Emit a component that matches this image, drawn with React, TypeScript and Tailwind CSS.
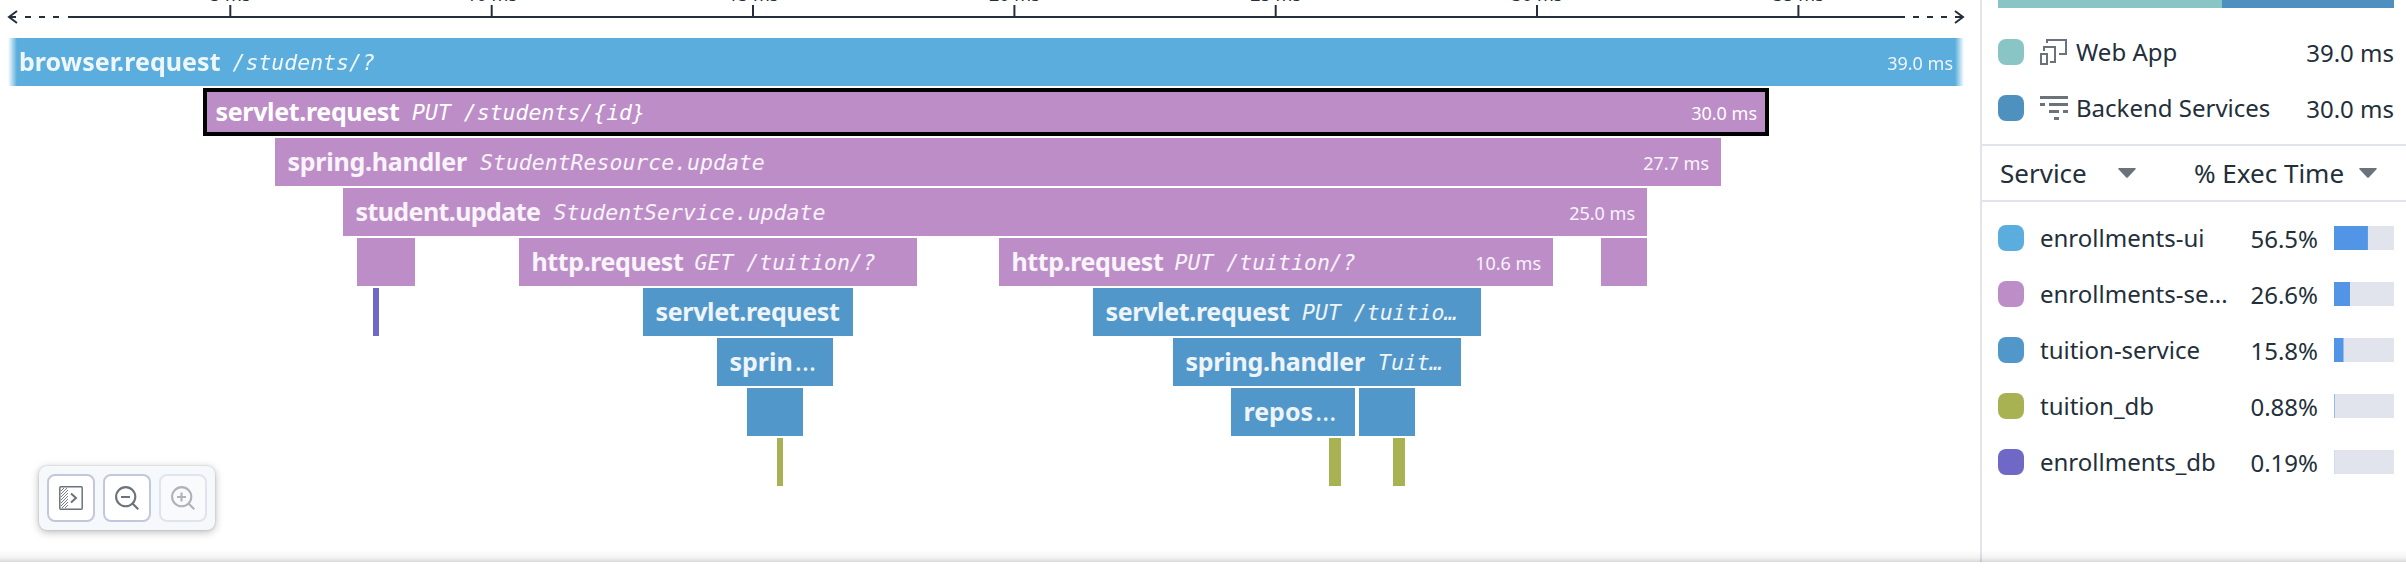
import React from "react";

type Span = { x: number; w: number; c: string; name?: string; cut?: boolean; res?: string; dur?: string; edge?: boolean; sel?: boolean; nameW?: string };

const P = "bg-[#bd8dc8]";
const B = "bg-[#5297c9]";
const G = "bg-[#a9b252]";

const BROWSER = "w-[200.5px] tracking-[0.06px]";
const SERVLET = "w-[183.5px] tracking-[-0.34px]";
const SPRING = "w-[179.5px] tracking-[-0.25px]";
const STUDENT = "w-[185px] tracking-[-0.6px]";
const HTTP = "w-[150px] tracking-[-0.4px]";

const rows: Span[][] = [
  [{ x: 8, w: 1956, c: "bg-[#5aaddc]", name: "browser.request", res: "/students/?", dur: "39.0 ms", edge: true, nameW: BROWSER }],
  [{ x: 203, w: 1566, c: P, name: "servlet.request", res: "PUT /students/{id}", dur: "30.0 ms", sel: true, nameW: SERVLET }],
  [{ x: 275, w: 1446, c: P, name: "spring.handler", res: "StudentResource.update", dur: "27.7 ms", nameW: SPRING }],
  [{ x: 343, w: 1304, c: P, name: "student.update", res: "StudentService.update", dur: "25.0 ms", nameW: STUDENT }],
  [
    { x: 357, w: 58, c: P },
    { x: 519, w: 398, c: P, name: "http.request", res: "GET /tuition/?", nameW: HTTP },
    { x: 999, w: 554, c: P, name: "http.request", res: "PUT /tuition/?", dur: "10.6 ms", nameW: HTTP },
    { x: 1601, w: 46, c: P },
  ],
  [
    { x: 373, w: 6, c: "bg-[#6f68c6]" },
    { x: 643, w: 210, c: B, name: "servlet.request", nameW: SERVLET },
    { x: 1093, w: 388, c: B, name: "servlet.request", res: "PUT /tuitio…", nameW: SERVLET },
  ],
  [
    { x: 717, w: 116, c: B, name: "sprin", cut: true },
    { x: 1173, w: 288, c: B, name: "spring.handler", res: "Tuit…", nameW: SPRING },
  ],
  [
    { x: 747, w: 56, c: B },
    { x: 1231, w: 124, c: B, name: "repos", cut: true },
    { x: 1359, w: 56, c: B },
  ],
  [
    { x: 777, w: 6, c: G },
    { x: 1329, w: 12, c: G },
    { x: 1393, w: 12, c: G },
  ],
];

function SpanBar({ s, gap }: { s: Span; gap: number }) {
  const pad = s.name ? (s.sel ? "border-4 border-black pl-[8.5px] pr-2" : s.edge ? "pl-[11px] pr-[11px]" : "pl-[12.5px] pr-3") : "";
  const text = s.sel ? "text-white" : "text-white/90";
  const fade = s.edge ? "[mask-image:linear-gradient(to_right,transparent,black_9px,black_calc(100%-9px),transparent)]" : "";
  return (
    <div className={`flex h-12 shrink-0 items-center overflow-hidden whitespace-nowrap ${s.c} ${pad} ${text} ${fade}`} style={{ marginLeft: gap, width: s.w }}>
      {s.name && (
        <span className={`mb-[3px] shrink-0 text-[25px] leading-[36px] font-bold ${s.nameW ?? ""}`}>
          {s.name}
          {s.cut && <span className="ml-0.5 text-[27px] font-normal">…</span>}
        </span>
      )}
      {s.res && <span className="mt-px ml-[13px] font-['DejaVu_Sans_Mono',monospace] text-[21.5px] leading-[36px] italic">{s.res}</span>}
      {s.dur && <span className="mt-0.5 ml-auto text-[18px]">{s.dur}</span>}
    </div>
  );
}

const ticks = [
  { x: 230.3, label: "5 ms" },
  { x: 491.7, label: "10 ms" },
  { x: 753, label: "15 ms" },
  { x: 1014.4, label: "20 ms" },
  { x: 1275.7, label: "25 ms" },
  { x: 1537, label: "30 ms" },
  { x: 1798.4, label: "35 ms" },
];

function Axis() {
  return (
    <svg width="1980" height="38" viewBox="0 0 1980 38" className="block shrink-0" fill="none" stroke="#232f3a" strokeWidth="2">
      <path d="M68 17H1905M10 17H16M25 17h6M39 17h6M53 17h6M1913 17h6M1927 17h6M1941 17h6M1955 17h8" />
      <path d="M17 11L9 17L17 23M1955 11L1963 17L1955 23" />
      {ticks.map((t) => (
        <g key={t.label}>
          <path d={`M${t.x} 5V17`} />
          <text x={t.x} y="1" textAnchor="middle" fill="#232f3a" stroke="none" className="text-[18px]">{t.label}</text>
        </g>
      ))}
    </svg>
  );
}

function Toolbar() {
  const btn = "flex size-12 items-center justify-center rounded-lg border-2";
  return (
    <div className="absolute top-[466px] left-[39px] flex h-16 w-44 items-center gap-2 rounded-lg bg-[#f6f9fc] px-2 shadow-[0_2px_8px_rgba(0,0,0,0.28),0_0_2px_rgba(0,0,0,0.2)]">
      <button className={`${btn} border-[#c2c7de] bg-white`}>
        <svg width="24" height="24" viewBox="0 0 24 24" fill="none" stroke="#6a737b" strokeWidth="1.5">
          <rect x="0.8" y="0.8" width="22.4" height="22.4" rx="1" />
          <path strokeWidth="0.9" d="M2 5L5 2M2 8L8 2M2 11L9 4M2 14L9 7M2 17L9 10M2 20L9 13M3 22L9 16M6 22L9 19" />
          <path strokeWidth="2" d="M12 7.5L17 12L12 16.5" />
        </svg>
      </button>
      <button className={`${btn} border-[#c2c7de] bg-white`}>
        <svg width="24" height="24" viewBox="0 0 24 24" fill="none" stroke="#6a737b" strokeWidth="2.1">
          <circle cx="10.7" cy="10.7" r="9.6" />
          <path d="M6 11H15M17.5 17.5L23.3 23.3" />
        </svg>
      </button>
      <button className={`${btn} border-[#e1e4ec] bg-[#f8fafc]`}>
        <svg width="24" height="24" viewBox="0 0 24 24" fill="none" stroke="#adb3b6" strokeWidth="2.1">
          <circle cx="10.7" cy="10.7" r="9.6" />
          <path d="M6 11H15M10.5 6.5V15.5M17.5 17.5L23.3 23.3" />
        </svg>
      </button>
    </div>
  );
}

const services = [
  { n: "enrollments-ui", c: "bg-[#5aaddc]", p: "56.5%", v: 0.565 },
  { n: "enrollments-se...", c: "bg-[#bd8dc8]", p: "26.6%", v: 0.266 },
  { n: "tuition-service", c: "bg-[#5297c9]", p: "15.8%", v: 0.158 },
  { n: "tuition_db", c: "bg-[#a9b252]", p: "0.88%", v: 0.0088 },
  { n: "enrollments_db", c: "bg-[#6f68c6]", p: "0.19%", v: 0.0019 },
];

function Caret({ className }: { className: string }) {
  return (
    <svg width="18" height="10" viewBox="0 0 18 10" className={`shrink-0 ${className}`} fill="#6a737b">
      <path d="M1 0H17Q18.5 0 17.5 1.2L10 9.3Q9 10.3 8 9.3L0.5 1.2Q-0.5 0 1 0Z" />
    </svg>
  );
}

function Sidebar() {
  return (
    <aside className="flex h-[562px] flex-1 flex-col border-l-2 border-[#e2e4ec] text-[24px] leading-8">
      <div className="mr-3 ml-4 flex h-2 shrink-0">
        <div className="w-56 bg-[#89c5c4]" />
        <div className="flex-1 bg-[#4e91bf]" />
      </div>
      <div className="flex h-[136px] shrink-0 flex-col pt-4 pr-3 pl-4">
        <div className="flex h-14 items-center">
          <span className="size-[26px] rounded-lg bg-[#89c5c4]" />
          <svg width="28" height="28" viewBox="0 0 28 28" className="ml-4" fill="none" stroke="#6a737b" strokeWidth="2">
            <path d="M7 5V2H26V16H19M4 13V9H15V24H10" />
            <rect x="1" y="16" width="6" height="10" />
          </svg>
          <span className="ml-2">Web App</span>
          <span className="mt-0.5 ml-auto">39.0 ms</span>
        </div>
        <div className="flex h-14 items-center">
          <span className="size-[26px] rounded-lg bg-[#4e91bf]" />
          <svg width="28" height="28" viewBox="0 0 28 28" className="ml-4" fill="#6a737b">
            <path d="M0 2h28v3H0zM0 9h5v3H0zM9 9h19v3H9zM9 16h10v3H9zM23 16h5v3h-5zM14 23h5v3h-5z" />
          </svg>
          <span className="ml-2">Backend Services</span>
          <span className="mt-0.5 ml-auto">30.0 ms</span>
        </div>
      </div>
      <div className="flex h-[58px] shrink-0 items-center border-y-2 border-[#e2e4ec] pl-[18px] text-[26px] whitespace-nowrap">
        <span className="w-[118px]">Service</span>
        <Caret className="" />
        <span className="ml-[58px] w-[150px]">% Exec Time</span>
        <Caret className="ml-[15px]" />
      </div>
      <div className="flex flex-col pt-2 pr-3 pl-4">
        {services.map((s) => (
          <div key={s.n} className="flex h-14 items-center">
            <span className={`size-[26px] rounded-lg ${s.c}`} />
            <span className="ml-4 whitespace-nowrap">{s.n}</span>
            <span className="mt-0.5 mr-4 ml-auto">{s.p}</span>
            <span className="flex h-6 w-[60px] bg-[#e1e4ec]">
              <span className="h-full w-full origin-left bg-[#5294e6]" style={{ transform: `scaleX(${s.v})` }} />
            </span>
          </div>
        ))}
      </div>
    </aside>
  );
}

export default function App() {
  return (
    <div className="relative flex h-[568px] w-[2406px] overflow-hidden bg-white font-['Noto_Sans',sans-serif] text-[#232f3a]">
      <main className="flex w-[1980px] shrink-0 flex-col">
        <Axis />
        <div className="flex flex-col gap-0.5">
          {rows.map((row, i) => (
            <div key={i} className="flex h-12">
              {row.map((s, j) => (
                <SpanBar key={j} s={s} gap={j ? s.x - row[j - 1].x - row[j - 1].w : s.x} />
              ))}
            </div>
          ))}
        </div>
      </main>
      <Sidebar />
      <Toolbar />
      <div className="absolute bottom-1.5 left-0 h-3 w-full bg-linear-to-t from-black/15 via-black/5 via-35% to-transparent" />
    </div>
  );
}
